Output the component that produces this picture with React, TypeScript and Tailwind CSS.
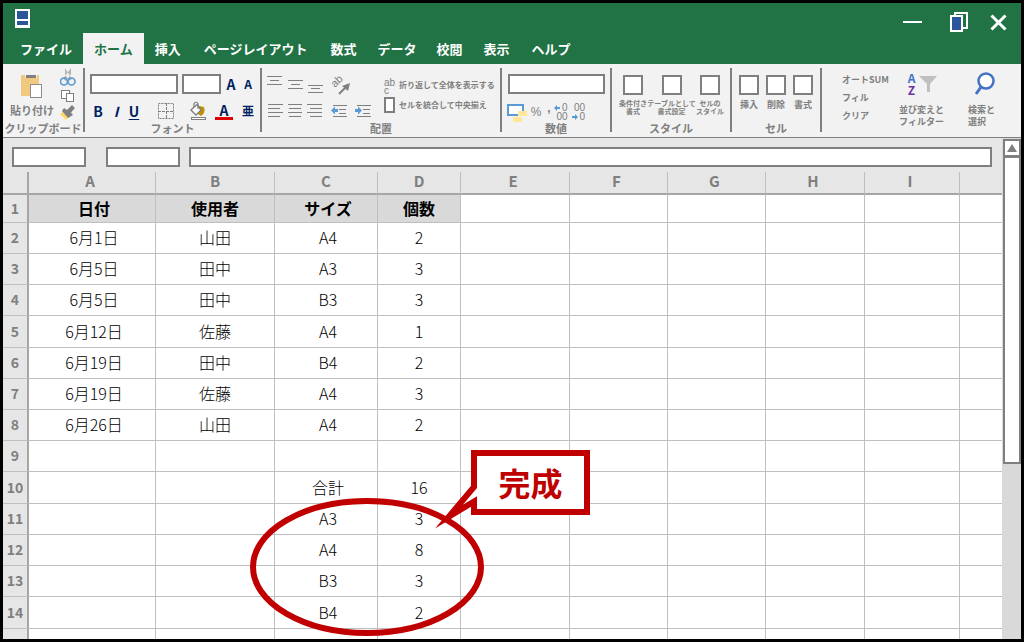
import type { ReactNode } from "react";
import clsx from "clsx";

const TABS = [
  { label: "ファイル", pad: "px-[11px]" },
  { label: "ホーム", pad: "px-[11px]", active: true },
  { label: "挿入", pad: "px-[11px]" },
  { label: "ページレイアウト", pad: "px-3" },
  { label: "数式", pad: "px-[11px]" },
  { label: "データ", pad: "px-2.5" },
  { label: "校閲", pad: "px-2.5" },
  { label: "表示", pad: "px-[11px]" },
  { label: "ヘルプ", pad: "px-[11px]" },
];

const COLUMNS = [
  { name: "A", width: "w-[127px]" },
  { name: "B", width: "w-[119px]" },
  { name: "C", width: "w-[103px]" },
  { name: "D", width: "w-[83px]" },
  { name: "E", width: "w-[109px]" },
  { name: "F", width: "w-[98px]" },
  { name: "G", width: "w-[98px]" },
  { name: "H", width: "w-[99px]" },
  { name: "I", width: "w-[95px]" },
  { name: "", width: "" },
];

const ROWS = [
  { no: "1", height: "h-7", cells: ["日付", "使用者", "サイズ", "個数"] },
  { no: "2", height: "h-[31px]", cells: ["6月1日", "山田", "A4", "2"] },
  { no: "3", height: "h-[31px]", cells: ["6月5日", "田中", "A3", "3"] },
  { no: "4", height: "h-[31px]", cells: ["6月5日", "田中", "B3", "3"] },
  { no: "5", height: "h-8", cells: ["6月12日", "佐藤", "A4", "1"] },
  { no: "6", height: "h-[31px]", cells: ["6月19日", "田中", "B4", "2"] },
  { no: "7", height: "h-[31px]", cells: ["6月19日", "佐藤", "A4", "3"] },
  { no: "8", height: "h-[31px]", cells: ["6月26日", "山田", "A4", "2"] },
  { no: "9", height: "h-[31px]", cells: [] },
  { no: "10", height: "h-8", cells: ["", "", "合計", "16"] },
  { no: "11", height: "h-[31px]", cells: ["", "", "A3", "3"] },
  { no: "12", height: "h-[31px]", cells: ["", "", "A4", "8"] },
  { no: "13", height: "h-[31px]", cells: ["", "", "B3", "3"] },
  { no: "14", height: "h-8", cells: ["", "", "B4", "2"] },
  { no: "", height: "h-2.5", cells: [] },
];

function Group({ label, last, children }: { label?: string; last?: boolean; children: ReactNode }) {
  return (
    <section className={clsx("flex h-16 min-w-0 flex-col", !last && "border-r-2 border-[#7f7f7f]")}>
      <div className="flex-1">{children}</div>
      {label && <h2 className="text-center text-[11px] font-bold leading-2 whitespace-nowrap">{label}</h2>}
    </section>
  );
}

function PasteIcon() {
  return (
    <svg width="22" height="24" viewBox="0 0 22 24" shapeRendering="crispEdges">
      <rect x="0" y="1" width="18" height="21" fill="#f0c97f" />
      <rect x="4" y="0" width="12" height="4" fill="#f2f2f2" />
      <rect x="5" y="1" width="10" height="3" fill="#7f7f7f" />
      <rect x="9.500" y="10.500" width="11" height="13" fill="#fff" stroke="#8c8c8c" />
    </svg>
  );
}

function CutIcon() {
  return (
    <svg width="16" height="19" viewBox="0 0 16 19">
      <path d="M5 0L12 11L9 13L5 6Z M11 0L3 11L6 13L11 6Z" fill="#b3b3b3" />
      <circle cx="4" cy="13.500" r="3.500" fill="none" stroke="#5b9bd5" strokeWidth="1.700" />
      <circle cx="11.500" cy="13.500" r="3.500" fill="none" stroke="#5b9bd5" strokeWidth="1.700" />
    </svg>
  );
}

function CopyIcon() {
  return (
    <svg width="16" height="13" viewBox="0 0 16 13" fill="#fff" stroke="#7f7f7f" shapeRendering="crispEdges">
      <rect x="1.500" y="0.500" width="8" height="8" />
      <rect x="6.500" y="3.500" width="7" height="8" />
    </svg>
  );
}

function BrushIcon() {
  return (
    <svg width="16" height="16" viewBox="0 0 16 16">
      <path d="M0 9L3 7L8 13L6 15Z" fill="#ffd966" />
      <path d="M2 6L4 3L7 5L12 0L15 3L11 7.500L13 10L8 13Z" fill="#7f7f7f" />
    </svg>
  );
}

function BordersIcon() {
  return (
    <svg width="18" height="18" viewBox="0 0 18 18" fill="none" stroke="#7f7f7f">
      <rect x="1.500" y="1.500" width="15" height="15" strokeDasharray="2 1" />
      <path d="M9.500 1V17M1 9.500H17" strokeDasharray="3 1" />
    </svg>
  );
}

function FillIcon() {
  return (
    <svg width="18" height="20" viewBox="0 0 18 20">
      <path d="M10 5L15 6Q17 12 12 15L9 13Z" fill="#bf9000" />
      <path d="M2 9L8 3.500L12 9L7 14Z" fill="#fff" stroke="#7f7f7f" strokeWidth="1.400" />
      <path d="M5 6V2.500Q7 0 9 2.500V8" fill="none" stroke="#7f7f7f" strokeWidth="1.200" />
      <rect x="2.500" y="16.500" width="14" height="2" fill="#fff" stroke="#7f7f7f" />
    </svg>
  );
}

// Each bar is [x, y, width] in a 16x20 box
function LinesIcon({ bars }: { bars: number[][] }) {
  return (
    <svg width="16" height="20" viewBox="0 0 16 20" fill="#7f7f7f" shapeRendering="crispEdges">
      {bars.map(([x, y, w]) => (
        <rect key={y} x={x} y={y} width={w} height="1" />
      ))}
    </svg>
  );
}

function IndentIcon({ inward }: { inward?: boolean }) {
  return (
    <svg width="16" height="20" viewBox="0 0 16 20">
      <path d="M2 4.500H16M8 8.500H15M8 12.500H15M2 15.500H16" stroke="#7f7f7f" shapeRendering="crispEdges" />
      <path
        d={inward ? "M0 8H3V5.500L7 9.500L3 13.500V11H0Z" : "M7 8H4V5.500L0 9.500L4 13.500V11H7Z"}
        fill="#5b9bd5"
      />
    </svg>
  );
}

function OrientationIcon() {
  return (
    <svg width="20" height="20" viewBox="0 0 20 20" className="overflow-visible">
      <text x="4" y="13" fontSize="11" fontFamily="Liberation Sans" fill="#7f7f7f" transform="rotate(-45 4 13)">
        ab
      </text>
      <path d="M8 19L14 13" stroke="#7f7f7f" strokeWidth="2" />
      <path d="M19 8L17 16L11 11Z" fill="#7f7f7f" />
    </svg>
  );
}

function CurrencyIcon() {
  return (
    <svg width="20" height="20" viewBox="0 0 20 20" shapeRendering="crispEdges">
      <rect x="1" y="3" width="15" height="10" fill="#fff" stroke="#5b9bd5" strokeWidth="2" />
      <rect x="11" y="9" width="9" height="5" fill="#ffe699" />
      <rect x="6" y="15" width="9" height="5" fill="#ffe699" />
    </svg>
  );
}

function SmallArrow({ right }: { right?: boolean }) {
  return (
    <svg width="6" height="6" viewBox="0 0 6 6">
      <path d={right ? "M0 2H3V0L6 3L3 6V4H0Z" : "M6 2H3V0L0 3L3 6V4H6Z"} fill="#5b9bd5" />
    </svg>
  );
}

function BoxButton({ lines, className }: { lines: string[]; className: string }) {
  return (
    <button type="button" className={clsx("flex flex-col items-center whitespace-nowrap font-bold", className)}>
      <span className="mb-1 size-5 border-2 border-[#7f7f7f] bg-white" />
      {lines.map((line) => (
        <span key={line}>{line}</span>
      ))}
    </button>
  );
}

function TitleBar() {
  return (
    <header className="flex h-[61px] flex-col bg-[#217346] text-white">
      <div className="flex h-[30px] items-center justify-between pl-3 pr-3.5">
        <svg width="15" height="19" viewBox="0 0 15 19" shapeRendering="crispEdges">
          <rect width="15" height="19" fill="#fff" />
          <rect x="2" y="2" width="11" height="8" fill="#2b579a" />
          <rect x="2" y="12" width="11" height="4" fill="#2b579a" />
        </svg>
        <div className="flex items-center pt-2">
          <button type="button" aria-label="最小化" className="mr-7">
            <svg width="19" height="20" viewBox="0 0 19 20" shapeRendering="crispEdges">
              <rect y="9" width="19" height="2" fill="#fff" />
            </svg>
          </button>
          <button type="button" aria-label="元に戻す" className="mr-[21px]">
            <svg width="19" height="20" viewBox="0 0 19 20" shapeRendering="crispEdges">
              <rect x="5" y="1" width="12" height="15" fill="none" stroke="#fff" strokeWidth="2" />
              <rect x="1" y="4" width="11" height="15" fill="#2b579a" stroke="#fff" strokeWidth="2" />
            </svg>
          </button>
          <button type="button" aria-label="閉じる">
            <svg width="17" height="17" viewBox="0 0 17 17">
              <path d="M1.500 1.500L15.500 15.500M15.500 1.500L1.500 15.500" stroke="#fff" strokeWidth="3" />
            </svg>
          </button>
        </div>
      </div>
      <nav className="flex h-[31px] pl-1.5">
        {TABS.map((tab) => (
          <button
            key={tab.label}
            type="button"
            className={clsx(
              "text-[13px] font-bold leading-[31px] whitespace-nowrap",
              tab.pad,
              tab.active && "bg-[#f2f2f2] text-[#217346]",
            )}
          >
            {tab.label}
          </button>
        ))}
      </nav>
    </header>
  );
}

function Ribbon() {
  const field = "h-5 border-2 border-[#7f7f7f] bg-white px-1 text-xs";
  return (
    <div className="grid h-[74px] grid-cols-[82fr_177fr_240fr_110fr_120fr_90fr_199fr] border-b border-[#7f7f7f] bg-[#f2f2f2] pt-1 text-[#7f7f7f]">
      <Group label="クリップボード">
        <div className="flex pl-[7px]">
          <button type="button" className="flex w-11 flex-col items-center pt-1.5">
            <PasteIcon />
            <span className="mt-1 text-[11px] font-bold leading-4 whitespace-nowrap">貼り付け</span>
          </button>
          <div className="ml-1.5 flex flex-col">
            <button type="button" aria-label="切り取り">
              <CutIcon />
            </button>
            <button type="button" aria-label="コピー" className="mt-[3px]">
              <CopyIcon />
            </button>
            <button type="button" aria-label="書式のコピー" className="mt-0.5">
              <BrushIcon />
            </button>
          </div>
        </div>
      </Group>

      <Group label="フォント">
        <div className="flex items-center gap-1 pl-[5px] pt-1.5 font-bold text-[#002060]">
          <input aria-label="フォント名" className={clsx(field, "w-22")} />
          <input aria-label="フォントサイズ" className={clsx(field, "w-[39px]")} />
          <button type="button" className="w-3 text-sm leading-5">A</button>
          <button type="button" className="w-3.5 text-xs leading-5">A</button>
        </div>
        <div className="mt-[7px] flex items-center pl-1 text-sm font-bold leading-5 text-[#002060]">
          <button type="button" className="w-[18px]">B</button>
          <button type="button" className="w-[18px] italic">I</button>
          <button type="button" className="w-[18px] underline underline-offset-2">U</button>
          <button type="button" aria-label="罫線" className="ml-3.5">
            <BordersIcon />
          </button>
          <button type="button" aria-label="塗りつぶしの色" className="ml-3.5">
            <FillIcon />
          </button>
          <button type="button" className="ml-2 w-[18px] border-b-3 border-[#e00000] leading-[14px]">A</button>
          <button type="button" className="ml-2 w-3.5 text-xs leading-4">亜</button>
        </div>
      </Group>

      <Group label="配置">
        <div className="flex pl-[5px]">
          <div className="pt-[7px]">
            <div className="flex gap-1">
              <LinesIcon bars={[[0, 1, 15], [3, 5, 9], [0, 9, 15]]} />
              <LinesIcon bars={[[1, 5, 15], [4, 9, 9], [1, 13, 15]]} />
              <LinesIcon bars={[[1, 10, 15], [4, 13, 9], [1, 17, 15]]} />
              <button type="button" aria-label="方向" className="ml-1">
                <OrientationIcon />
              </button>
            </div>
            <div className="mt-1.5 flex gap-1">
              <LinesIcon bars={[[1, 3, 15], [1, 7, 12], [1, 11, 15], [1, 15, 12]]} />
              <LinesIcon bars={[[1, 3, 14], [2, 7, 12], [1, 11, 14], [2, 15, 12]]} />
              <LinesIcon bars={[[0, 3, 15], [3, 7, 12], [0, 11, 15], [3, 15, 12]]} />
              <button type="button" aria-label="インデントを減らす" className="ml-1">
                <IndentIcon />
              </button>
              <button type="button" aria-label="インデントを増やす" className="ml-1">
                <IndentIcon inward />
              </button>
            </div>
          </div>
          <div className="ml-[13px] flex flex-col gap-1 pt-2 text-[8px] font-bold whitespace-nowrap">
            <button type="button" className="flex h-[17px] items-center gap-1">
              <span className="flex w-[11px] flex-col pt-1 text-left font-['Liberation_Sans',sans-serif] text-[10px] font-normal leading-2">
                <span>ab</span>
                <span>c</span>
              </span>
              折り返して全体を表示する
            </button>
            <button type="button" className="flex h-4 items-center gap-1">
              <span className="h-4 w-[11px] border-2 border-[#7f7f7f] bg-white" />
              セルを統合して中央揃え
            </button>
          </div>
        </div>
      </Group>

      <Group label="数値">
        <div className="flex pl-1.5 pr-[5px] pt-1.5">
          <input aria-label="表示形式" className={clsx(field, "w-full")} />
        </div>
        <div className="mt-2 flex items-center pl-[5px] font-['Liberation_Sans',sans-serif]">
          <button type="button" aria-label="通貨表示形式">
            <CurrencyIcon />
          </button>
          <button type="button" className="ml-[3px] w-3 text-xs leading-4">%</button>
          <button type="button" className="ml-1 w-1.5 pb-2 text-xs font-bold leading-3">,</button>
          <button type="button" className="ml-0.5 text-right text-[10px] leading-[9px]">
            <span className="flex items-center justify-end gap-0.5">
              <SmallArrow />0
            </span>
            00
          </button>
          <button type="button" className="ml-1 text-right text-[10px] leading-[9px]">
            00
            <span className="flex items-center justify-end gap-0.5">
              <SmallArrow right />0
            </span>
          </button>
        </div>
      </Group>

      <Group label="スタイル">
        <div className="flex pl-[7px] pt-[7px]">
          <BoxButton lines={["条件付き", "書式"]} className="w-7 text-[7px] leading-2" />
          <BoxButton lines={["テーブルとして", "書式設定"]} className="w-[49px] text-[7px] leading-2" />
          <BoxButton lines={["セルの", "スタイル"]} className="w-7 text-[7px] leading-2" />
        </div>
      </Group>

      <Group label="セル">
        <div className="flex gap-[7px] pl-[7px] pt-[7px]">
          <BoxButton lines={["挿入"]} className="w-5 text-[9px] leading-3" />
          <BoxButton lines={["削除"]} className="w-5 text-[9px] leading-3" />
          <BoxButton lines={["書式"]} className="w-5 text-[9px] leading-3" />
        </div>
      </Group>

      <Group last>
        <div className="flex pl-5 text-[9px] font-bold leading-3 whitespace-nowrap">
          <div className="flex w-[57px] flex-col items-start gap-1.5 pt-1.5">
            <button type="button">オートSUM</button>
            <button type="button">フィル</button>
            <button type="button">クリア</button>
          </div>
          <button type="button" className="flex w-[45px] flex-col items-center pt-1">
            <span className="mb-2 flex h-6 gap-0.5 text-xs leading-3">
              <span className="flex w-2.5 flex-col">
                <span className="text-[#4472c4]">A</span>
                <span className="text-[#7030a0]">Z</span>
              </span>
              <svg width="18" height="20" viewBox="0 0 18 20">
                <path d="M0 4H18L11 12V20H8V12Z" fill="#bfbfbf" />
              </svg>
            </span>
            <span>並び変えと</span>
            <span>フィルター</span>
          </button>
          <button type="button" className="ml-6 flex flex-col items-start pt-1">
            <svg width="28" height="24" viewBox="0 0 28 24" className="mb-2" fill="none" stroke="#4472c4">
              <circle cx="18" cy="9" r="7.500" fill="#fff" strokeWidth="2.500" />
              <path d="M13 15L8 22" strokeWidth="3" />
            </svg>
            <span>検索と</span>
            <span>選択</span>
          </button>
        </div>
      </Group>
    </div>
  );
}

function Sheet() {
  return (
    <table className="w-full table-fixed border-separate border-spacing-0 bg-white text-center text-base leading-5">
      <colgroup>
        <col className="w-[26px]" />
        {COLUMNS.map((col, i) => (
          <col key={i} className={col.width} />
        ))}
      </colgroup>
      <thead>
        <tr className="h-[23px] bg-[#e6e6e6] text-[15px] leading-4 text-[#7f7f7f]">
          <th className="border-r-2 border-b-2 border-[#a6a6a6] p-0" />
          {COLUMNS.map((col, i) => (
            <th
              key={i}
              scope="col"
              className={clsx(
                "border-b-2 border-b-[#a6a6a6] p-0 pb-1 font-bold",
                (i === 0 || i > 3) && "pr-1",
                i < 9 && "border-r border-r-[#bfbfbf]",
              )}
            >
              {col.name}
            </th>
          ))}
        </tr>
      </thead>
      <tbody>
        {ROWS.map((row, r) => (
          <tr key={r} className={row.height}>
            <th
              scope="row"
              className={clsx(
                "border-r-2 border-r-[#a6a6a6] bg-[#e6e6e6] p-0 text-sm leading-5 font-bold text-[#7f7f7f]",
                row.no && "border-b border-b-[#bfbfbf] pb-0.5",
              )}
            >
              {row.no}
            </th>
            {COLUMNS.map((col, c) => (
              <td
                key={c}
                className={clsx(
                  "border-[#bfbfbf] p-0 text-black",
                  row.no && "border-b pb-0.5",
                  c < 9 && "border-r",
                  (c === 0 || c === 2) && "pl-1",
                  r === 0 ? "font-bold" : "font-light",
                  r === 0 && c < 4 && "bg-[#d9d9d9]",
                )}
              >
                {row.cells[c]}
              </td>
            ))}
          </tr>
        ))}
      </tbody>
    </table>
  );
}

function ScrollBar() {
  return (
    <div className="w-[19px] bg-[#d9d9d9] pl-px pt-px">
      <button
        type="button"
        aria-label="上へスクロール"
        className="flex h-[18px] w-full items-center justify-center border-2 border-[#7f7f7f] bg-white"
      >
        <svg width="10" height="8" viewBox="0 0 10 8">
          <path d="M5 0L10 8H0Z" fill="#7f7f7f" />
        </svg>
      </button>
      <div className="-mt-px h-[308px] border-2 border-[#7f7f7f] bg-white" />
    </div>
  );
}

export default function App() {
  const box = "h-5 border-2 border-[#7f7f7f] bg-white px-1 text-xs";
  return (
    <div className="flex min-h-screen flex-col border-3 border-black bg-white font-['Noto_Sans_CJK_JP',sans-serif]">
      <TitleBar />
      <Ribbon />
      <main className="relative flex flex-1">
        <div className="min-w-0 flex-1">
          <div className="flex h-[34px] bg-[#e6e6e6] pl-[9px] pr-2.5 pt-[9px]">
            <input aria-label="名前ボックス" className={clsx(box, "w-[74px]")} />
            <input aria-label="関数" className={clsx(box, "ml-5 w-[74px]")} />
            <input aria-label="数式バー" className={clsx(box, "ml-[9px] min-w-0 flex-1")} />
          </div>
          <Sheet />
        </div>
        <ScrollBar />

        {/* annotations over the totals */}
        <svg
          className="pointer-events-none absolute left-[247px] top-[360px]"
          width="234"
          height="138"
          viewBox="0 0 234 138"
        >
          <ellipse cx="117" cy="69" rx="114" ry="66" fill="none" stroke="#c00000" strokeWidth="6" />
        </svg>
        <div className="absolute left-[432px] top-[312px] flex h-20 w-[155px] justify-end">
          <svg className="absolute inset-0" width="155" height="80" viewBox="0 0 155 80">
            <path
              d="M39 3H152V62H39V51.500L14 66.500L39 37Z"
              fill="#fff"
              stroke="#c00000"
              strokeWidth="6"
              strokeMiterlimit="10"
            />
          </svg>
          <p className="relative h-16 w-[119px] text-center text-[32px] font-bold leading-16 text-[#c00000]">完成</p>
        </div>
      </main>
    </div>
  );
}
